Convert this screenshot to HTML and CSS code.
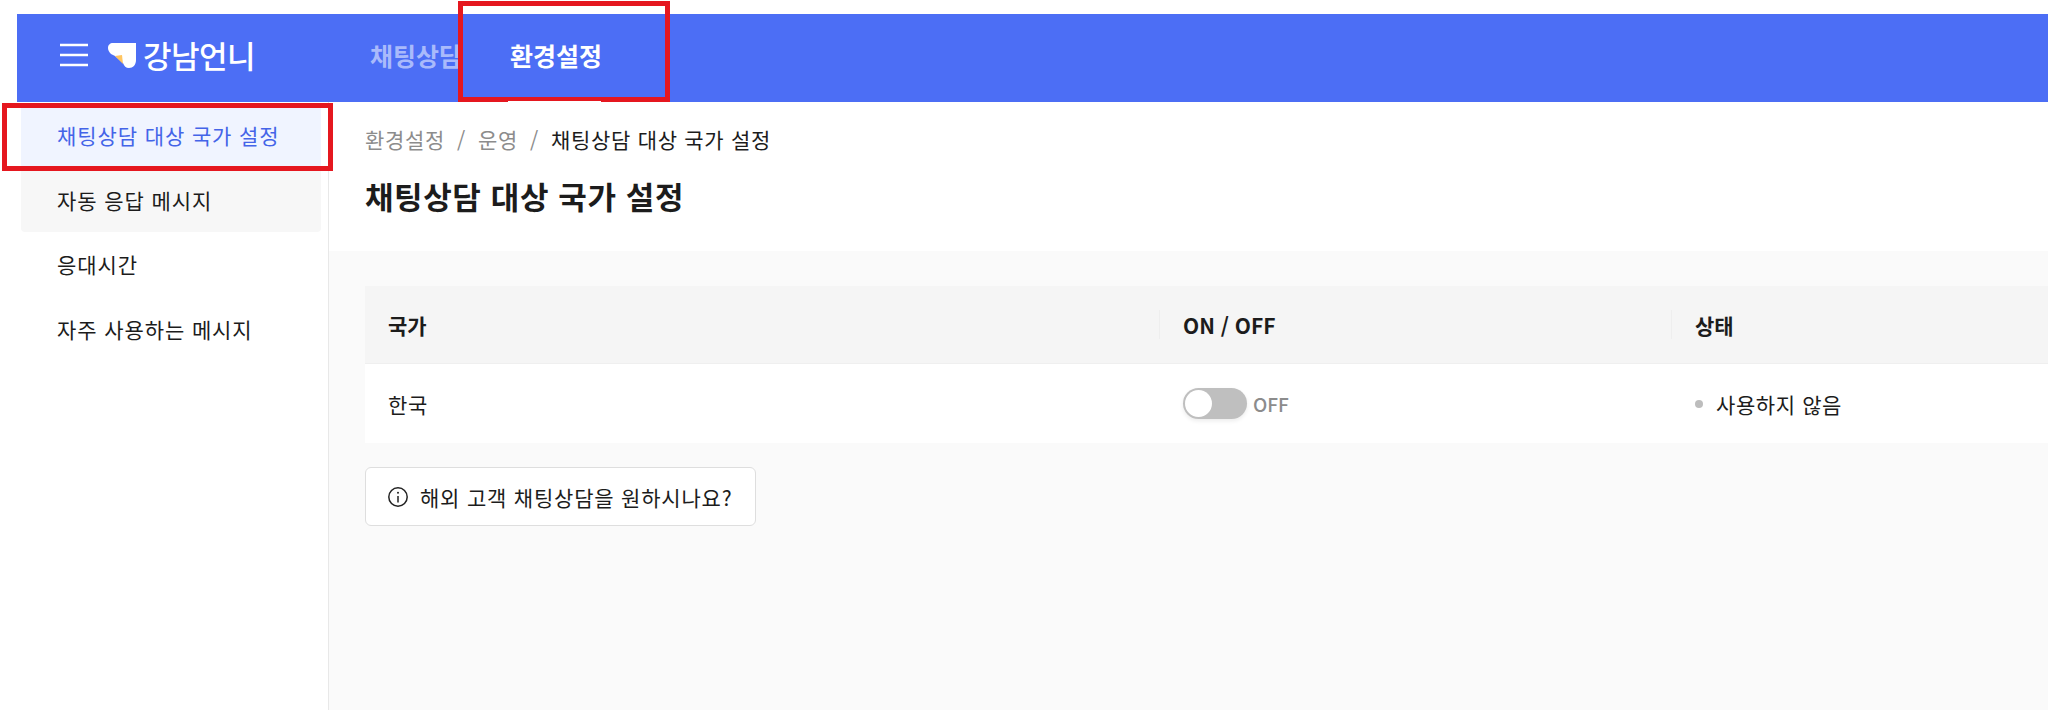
FILE: index.html
```html
<!DOCTYPE html>
<html lang="ko">
<head>
    <meta charset="UTF-8">
    <title>채팅상담 대상 국가 설정</title>
    <link rel="stylesheet" href="styles.css">
</head>
<body>

<header class="topbar">
    <svg class="menu-icon" viewBox="0 0 28 24" width="28" height="24">
        <path d="M0 2h28M0 12h28M0 22h28" stroke="#fff" stroke-width="2.4" fill="none"/>
    </svg>
    <div class="logo">
        <svg class="logo-mark" viewBox="0 0 28 25" width="28" height="25">
            <path d="M5 0H28V17C28 22 25 25 21 25C18 25 16 23 15 20L7 13L3 11C1 9 0 7 0 5C0 2 2 0 5 0Z" fill="#fff"/>
            <path d="M7 13L14 12L15 21Z" fill="#ffc561"/>
        </svg>
        <span class="logo-text">강남언니</span>
    </div>
    <nav class="topnav">
        <a class="topnav-item">채팅상담</a>
        <a class="topnav-item active">환경설정</a>
    </nav>
</header>

<div class="page">
    <aside class="sidebar">
        <a class="side-item active">채팅상담 대상 국가 설정</a>
        <a class="side-item hover">자동 응답 메시지</a>
        <a class="side-item">응대시간</a>
        <a class="side-item">자주 사용하는 메시지</a>
    </aside>

    <main class="main">
        <div class="page-head">
            <div class="breadcrumb">
                <span>환경설정</span><i>/</i><span>운영</span><i>/</i><span class="current">채팅상담 대상 국가 설정</span>
            </div>
            <h1>채팅상담 대상 국가 설정</h1>
        </div>

        <div class="content">
            <div class="table">
                <div class="row head">
                    <div class="cell col-country">국가</div>
                    <div class="cell col-toggle">ON / OFF</div>
                    <div class="cell col-status">상태</div>
                </div>
                <div class="row">
                    <div class="cell col-country">한국</div>
                    <div class="cell col-toggle">
                        <span class="switch"><span class="knob"></span></span>
                        <span class="switch-label">OFF</span>
                    </div>
                    <div class="cell col-status"><span class="dot"></span>사용하지 않음</div>
                </div>
            </div>

            <button class="info-btn">
                <svg viewBox="0 0 22 22" width="22" height="22">
                    <circle cx="11" cy="11" r="9.2" fill="none" stroke="#222" stroke-width="1.5"/>
                    <path d="M11 10v6.5" stroke="#222" stroke-width="1.5"/>
                    <circle cx="11" cy="6.8" r="1" fill="#222"/>
                </svg>
                해외 고객 채팅상담을 원하시나요?
            </button>
        </div>
    </main>
</div>

<div class="mark mark-tab"></div>
<div class="mark mark-side"></div>

</body>
</html>
```

FILE: styles.css
```css
* {
    box-sizing: border-box;
}

html, body {
    height: 100%;
}

body {
    margin: 0;
    height: 710px;
    overflow: hidden;
    display: flex;
    flex-direction: column;
    padding-top: 14px;
    background: #fff;
    color: #1c1c1c;
    font-family: "Noto Sans CJK KR", "Noto Sans", sans-serif;
}

.topbar {
    height: 88px;
    margin-left: 17px;
    padding: 0 0 7px 43px;
    display: flex;
    align-items: center;
    background: #4c6ef5;
    flex-shrink: 0;
}

.logo {
    display: flex;
    align-items: center;
    margin-left: 20px;
    gap: 7px;
}

.logo-mark {
    margin-top: 2px;
}

.logo-text {
    color: #fff;
    font-size: 31px;
    font-weight: 500;
    letter-spacing: -0.5px;
}

.topnav {
    display: flex;
    margin-left: 115px;
    gap: 48px;
}

.topnav-item {
    display: flex;
    align-items: center;
    font-size: 25px;
    font-weight: 700;
    color: #a9bafb;
}

.topnav-item.active {
    color: #fff;
}

.page {
    flex: 1;
    display: flex;
    min-height: 0;
}

.sidebar {
    width: 329px;
    flex-shrink: 0;
    padding: 1px 7px 0 21px;
    border-right: 1px solid #e8e8e8;
}

.side-item {
    display: flex;
    align-items: center;
    height: 64.5px;
    padding-left: 36px;
    font-size: 21px;
    letter-spacing: 0.9px;
    border-radius: 4px;
}

.side-item.active {
    background: #f0f4ff;
    color: #4464e8;
}

.side-item.hover {
    background: #f7f7f7;
}

.main {
    flex: 1;
    display: flex;
    flex-direction: column;
    min-width: 0;
}

.page-head {
    height: 149px;
    padding: 23px 0 0 36px;
}

.breadcrumb {
    display: flex;
    align-items: center;
    font-size: 21px;
    line-height: 28px;
    letter-spacing: 0.7px;
    color: #8c8c8c;
}

.breadcrumb i {
    font-style: normal;
    margin: 0 12px;
}

.breadcrumb .current {
    color: #1c1c1c;
}

h1 {
    margin: 22px 0 0;
    font-size: 31px;
    line-height: 42px;
    font-weight: 700;
    letter-spacing: 0.6px;
}

.content {
    flex: 1;
    padding: 35px 0 0 36px;
    background: #fafafa;
}

.row {
    display: flex;
    height: 79px;
    background: #fff;
    font-size: 21px;
    letter-spacing: 0.6px;
}

.row.head {
    height: 78px;
    background: #f5f5f5;
    border-bottom: 1px solid #efefef;
    font-weight: 700;
    letter-spacing: 0;
}

.cell {
    display: flex;
    align-items: center;
    padding-left: 24px;
    position: relative;
}

.col-country {
    width: 794px;
    padding-left: 23px;
}

.col-toggle {
    width: 512px;
}

.col-status {
    flex: 1;
    padding-left: 24px;
}

.head .col-toggle::before,
.head .col-status::before {
    content: "";
    position: absolute;
    left: 0;
    top: 24px;
    bottom: 24px;
    width: 1px;
    background: #eeeeee;
}

.switch {
    width: 64px;
    height: 31px;
    border-radius: 16px;
    background: #bfbfbf;
    display: flex;
    align-items: center;
    padding-left: 2px;
    box-shadow: 0 2px 4px rgba(0, 0, 0, 0.08);
}

.knob {
    width: 27px;
    height: 27px;
    border-radius: 50%;
    background: #fff;
}

.switch-label {
    margin-left: 6px;
    font-size: 19px;
    font-weight: 500;
    letter-spacing: 0;
    color: #8c8c8c;
}

.dot {
    width: 8px;
    height: 8px;
    border-radius: 50%;
    background: #bdbdbd;
    margin-right: 13px;
}

.info-btn {
    margin-top: 24px;
    width: 391px;
    height: 59px;
    padding: 0 0 0 21px;
    display: flex;
    align-items: center;
    gap: 11px;
    background: #fff;
    border: 1px solid #dedede;
    border-radius: 6px;
    font-family: inherit;
    font-size: 21px;
    letter-spacing: 0.8px;
    color: #1c1c1c;
}

.mark {
    position: absolute;
    border: 5px solid #e5171f;
}

.mark-tab {
    left: 458px;
    top: 1px;
    width: 212px;
    height: 101px;
}

.mark-tab::after {
    content: "";
    position: absolute;
    left: 45px;
    bottom: -5px;
    width: 93px;
    height: 1px;
    background: #fff;
}

.mark-side {
    left: 2px;
    top: 103px;
    width: 331px;
    height: 68px;
}
```
